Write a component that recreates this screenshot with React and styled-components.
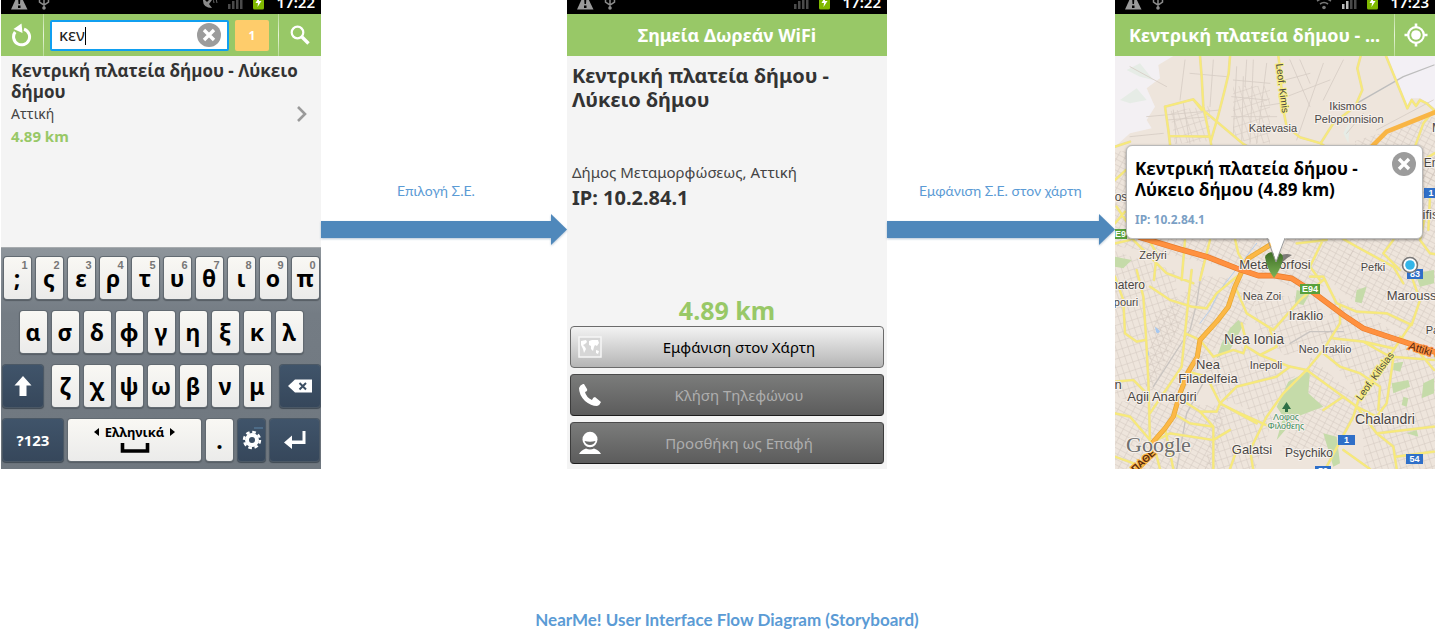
import React, { useState } from "react";
import styled, { createGlobalStyle, css } from "styled-components";

const GlobalStyle = createGlobalStyle`
    * { box-sizing: border-box; }
    body {
        margin: 0;
        background: white;
        font-family: "Noto Sans", "Open Sans", sans-serif;
    }
    h1, h2, h3, p { margin: 0; }
    button { font-family: inherit; padding: 0; border: 0; cursor: pointer; }
    svg { display: block; }
`;

const Page = styled.main`
    padding: 0 4px 0 1px;
`;

const Storyboard = styled.div`
    display: flex;
    align-items: stretch;
`;

const Phone = styled.section`
    flex: 0 0 320px;
    display: flex;
    flex-direction: column;
    background: #f4f4f4;
    overflow: hidden;
`;

const StatusBarWrapper = styled.div`
    display: flex;
    align-items: flex-end;
    height: 14px;
    padding: 0 6px 0 8px;
    gap: 9px;
    background: black;
    overflow: hidden;
`;

const Spacer = styled.span`
    flex: 1;
`;

const Clock = styled.span`
    color: white;
    font-size: 15px;
    font-weight: 600;
    line-height: 24px;
    padding-left: 3px;
`;

const TopBar = styled.header`
    display: flex;
    align-items: center;
    height: 42px;
    background: #98c867;
`;

const BarButton = styled.button`
    flex: 0 0 42px;
    height: 42px;
    display: grid;
    place-items: center;
    background: transparent;
    color: white;
`;

const Divider = styled.span`
    flex: 0 0 1px;
    align-self: stretch;
    background: linear-gradient(#b9dc97, #e6f3da 50%, #b9dc97);
`;

const BarTitle = styled.h2`
    flex: 1;
    padding: 0 14px;
    color: white;
    font-size: 18px;
    line-height: 24px;
    font-weight: 700;
    text-align: ${(props) => props.$align || "center"};
    white-space: nowrap;
`;

const SearchBox = styled.div`
    position: relative;
    display: flex;
    align-items: center;
    flex: 1;
    min-width: 0;
    height: 31px;
    margin: 0 6px;
    padding-right: 6px;
    border: 2px solid #109ff0;
    border-radius: 2px;
    background: white;
`;

const SearchInput = styled.input`
    flex: 1;
    min-width: 0;
    height: 27px;
    padding: 0 0 2px 7px;
    border: 0;
    outline: 0;
    background: transparent;
    color: #222;
    font-family: inherit;
    font-size: 17px;
`;

const Caret = styled.span`
    position: absolute;
    left: 33px;
    top: 5px;
    width: 1px;
    height: 18px;
    background: black;
`;

const CloseButton = styled.button`
    flex: 0 0 24px;
    width: 24px;
    height: 24px;
    border-radius: 50%;
    background: #9c9c9c;
    display: grid;
    place-items: center;
`;

const Count = styled.span`
    flex: 0 0 34px;
    height: 31px;
    margin-right: 9px;
    border-radius: 2px;
    background: #fecc6b;
    color: white;
    font-size: 12px;
    font-weight: 700;
    line-height: 31px;
    text-align: center;
`;

const ResultList = styled.ul`
    flex: 1;
    min-height: 191px;
    margin: 0;
    padding: 4px 10px;
    list-style: none;
`;

const Result = styled.li`
    display: flex;
    align-items: center;
`;

const ResultText = styled.div`
    flex: 1;
`;

const ResultTitle = styled.h3`
    color: #333;
    font-family: "Open Sans", "Noto Sans", sans-serif;
    font-size: 17px;
    line-height: 21px;
    white-space: nowrap;
`;

const ResultRow = styled.div`
    display: flex;
    justify-content: space-between;
    align-items: center;
    height: 24px;
    padding-right: 3px;
`;

const Region = styled.p`
    color: #444;
    font-size: 14px;
    line-height: 24px;
`;

const Distance = styled.p`
    color: #98c867;
    font-weight: 700;
    font-size: ${(props) => (props.$big ? "25px" : "15px")};
    line-height: ${(props) => (props.$big ? "32px" : "21px")};
    text-align: ${(props) => (props.$big ? "center" : "left")};
    margin-top: ${(props) => (props.$big ? "auto" : "0")};
`;

const Keyboard = styled.div`
    display: flex;
    flex-direction: column;
    gap: 12px;
    padding: 9px 1px 8px;
    background: linear-gradient(#8e959b, #747c84 30%, #6f777f);
    border-top: 1px solid #a7abae;
`;

const KeyRow = styled.div`
    display: flex;
    justify-content: center;
    gap: 5px;
`;

const LetterGroup = styled.div`
    display: flex;
    gap: 5px;
    margin: 0 4px;
`;

const Key = styled.button`
    position: relative;
    flex: 0 0 ${(props) => props.$width || 27}px;
    height: 42px;
    display: flex;
    flex-direction: column;
    align-items: center;
    justify-content: center;
    border-radius: 3px;
    color: black;
    font-size: 23px;
    line-height: 30px;
    font-weight: 700;
    background: linear-gradient(#f9f8f4, #ebebea);
    box-shadow: 0 0 0 1px #626a71, 0 1px 1px 1px #565d64;
    ${(props) =>
        props.$dark &&
        css`
            color: white;
            font-size: 15px;
            background: linear-gradient(#40546a, #36475b);
            box-shadow: 0 0 0 1px #4b5865, 0 1px 1px 1px #3f4953;
        `}
`;

const Hint = styled.span`
    position: absolute;
    right: 3px;
    top: 1px;
    color: #777;
    font-family: "Liberation Sans", Arial, sans-serif;
    font-size: 11px;
    font-weight: 700;
    line-height: 14px;
`;

const Language = styled.span`
    display: flex;
    align-items: center;
    gap: 6px;
    font-size: 13px;
    line-height: 16px;
`;

const FlowArrow = styled.div`
    flex: ${(props) => props.$grow} 1 0;
    min-width: 0;
    padding-top: 180px;
`;

const FlowLabel = styled.p`
    padding-left: ${(props) => props.$start}px;
    margin-bottom: 12px;
    color: #5b9bd5;
    font-family: Lato, "Noto Sans", sans-serif;
    font-size: 14px;
    line-height: 22px;
    white-space: nowrap;
`;

const ArrowLine = styled.div`
    display: flex;
    align-items: center;
    filter: drop-shadow(0 1px 1px rgba(70, 110, 150, 0.4));
`;

const ArrowBody = styled.div`
    flex: 1;
    height: 17px;
    background: #4f88bb;
`;

const Detail = styled.div`
    flex: 1;
    display: flex;
    flex-direction: column;
    padding: 8px 3px 5px;
`;

const DetailTitle = styled.h3`
    padding: 0 2px;
    color: #333;
    font-size: 20px;
    line-height: 24px;
`;

const Address = styled.p`
    margin-top: 48px;
    padding: 0 2px;
    color: #444;
    font-size: 15px;
    line-height: 24px;
`;

const IpLine = styled.p`
    padding: 0 2px;
    color: #333;
    font-size: 20px;
    font-weight: 700;
    line-height: 28px;
`;

const Actions = styled.div`
    display: flex;
    flex-direction: column;
    gap: 6px;
`;

const ActionButton = styled.button`
    display: flex;
    align-items: center;
    height: 42px;
    padding: 0 7px;
    border: 1px solid #6b6b6b;
    border-radius: 4px;
    background: linear-gradient(#f3f3f3, #b5b5b5);
    color: black;
    font-size: 15px;
    &:disabled {
        border-color: #4a4a4a #3c3c3c #1c1c1c;
        background: linear-gradient(#7b7c7b, #5c5c5c);
        color: #aeaeae;
    }
`;

const ActionText = styled.span`
    flex: 1;
    text-align: center;
`;

const MapArea = styled.div`
    position: relative;
    flex: 1;
    overflow: hidden;
    background: #eee6dc;
`;

const Balloon = styled.div`
    position: absolute;
    left: 11px;
    right: 12px;
    top: 89px;
    height: 94px;
    display: flex;
    align-items: flex-start;
    padding: 12px 6px 0 7px;
    border: 1px solid #b9b9b9;
    border-radius: 6px;
    background: white;
    box-shadow: 0 1px 3px rgba(0, 0, 0, 0.4);
`;

const BalloonText = styled.div`
    flex: 1;
    padding-left: 1px;
`;

const BalloonTitle = styled.h3`
    color: black;
    font-family: "Open Sans", "Noto Sans", sans-serif;
    font-size: 17px;
    line-height: 21px;
    white-space: nowrap;
`;

const BalloonIp = styled.p`
    margin-top: 10px;
    color: #7b9fc5;
    font-size: 12px;
    font-weight: 700;
    line-height: 20px;
`;

const CloseSlot = styled.div`
    margin-top: -6px;
`;

const Tail = styled.svg`
    position: absolute;
    left: 138px;
    top: 91px;
`;

const Caption = styled.h1`
    padding: 138px 0 8px 18px;
    color: #5b9bd5;
    font-family: Lato, "Noto Sans", sans-serif;
    font-size: 17px;
    line-height: 26px;
    text-align: center;
`;

function CrossIcon() {
    return (
        <svg width="14" height="14" viewBox="0 0 14 14">
            <path d="M2 2 L12 12 M12 2 L2 12" stroke="white" strokeWidth="3.4" />
        </svg>
    );
}

function StatusBar({ time, net }) {
    return (
        <StatusBarWrapper>
            <svg width="20" height="14" viewBox="0 0 20 14">
                <path d="M10 -8 L18.500 9.500 H2 Z" fill="#9a9a9a" />
                <path d="M9 -4 H11.500 L11 4 H9.500 Z M9 5.500 H11.500 V8 H9 Z" fill="black" />
            </svg>
            <svg width="12" height="14" viewBox="0 0 12 14" fill="none" stroke="#8b8b8b" strokeWidth="1.500">
                <path d="M6 -6 V7 M1.500 -1 V2 L6 5 L10.500 2 V-1" />
                <circle cx="6" cy="8" r="1.800" fill="#8b8b8b" stroke="none" />
            </svg>
            <Spacer />
            {net === "gps" && (
                <svg width="16" height="14" viewBox="0 0 16 14">
                    <path d="M1 -2 Q0 8 10 8 L7 4 L10 0 L8 -1 L5 2 Z" fill="#8b8b8b" />
                    <path d="M10 -1 Q12 0 12 3 M12 -3 Q15 -1 15 3" fill="none" stroke="#666" />
                </svg>
            )}
            {net === "wifi" && (
                <svg width="16" height="14" viewBox="0 0 16 14" fill="none" stroke="#777" strokeWidth="1.600">
                    <path d="M1 1 Q8 -4 15 1 M4 4 Q8 1 12 4" />
                    <circle cx="8" cy="7.500" r="1.800" fill="#777" stroke="none" />
                </svg>
            )}
            <svg width="16" height="14" viewBox="0 0 16 14" fill="#4a4a4a">
                <path d="M1 4 h2.500 v5 h-2.500 z M5 1 h2.500 v8 h-2.500 z" fill={net === "wifi" ? "#bbb" : "#4a4a4a"} />
                <path d="M9 -2 h2.500 v11 h-2.500 z M13 -5 h2.500 v14 h-2.500 z" />
            </svg>
            <svg width="13" height="14" viewBox="0 0 13 14">
                <rect x="1" y="-7" width="11" height="16.500" rx="1.500" fill="#7fb800" />
                <path d="M7 -3 L3.500 3 H6 L5.500 7 L9.500 1 H7 Z" fill="white" />
            </svg>
            <Clock>{time}</Clock>
        </StatusBarWrapper>
    );
}

function WorldIcon() {
    return (
        <svg width="24" height="22" viewBox="0 0 24 22">
            <rect x="1" y="1" width="22" height="20" fill="#d6d6d6" stroke="#f6f6f6" strokeWidth="1.500" />
            <path d="M3 5 L8 4 L9 6 L7 8 L5 9 L7 11 L8 13 L6 17 L5 13 L3 9 Z M11 5 L14 4 L20 4 L21 7 L19 10 L17 9 L16 11 L15 15 L13 13 L13 10 L11 9 Z M18 14 L21 15 L20 18 L18 17 Z" fill="white" />
        </svg>
    );
}

function PhoneIcon() {
    return (
        <svg width="24" height="24" viewBox="0 0 24 24">
            <path d="M5 1 Q2 2 1 5 Q1 12 7 18 Q13 23 19 23 Q22 22 23 19 L17 14 Q15 14 14 17 Q8 14 7 9 Q10 8 9 6 L6 1 Z" fill="white" />
        </svg>
    );
}

function PersonIcon() {
    return (
        <svg width="24" height="24" viewBox="0 0 24 24">
            <ellipse cx="12" cy="8.500" rx="7.500" ry="7.800" fill="white" />
            <path d="M6.500 10 Q12 11.500 17.500 10 Q16 14 12 14 Q8 14 6.500 10 Z" fill="#6a6b6a" />
            <path d="M1 23 Q3 19 8 17.500 Q12 19.500 16 17.500 Q21 19 23 23 Z" fill="white" />
        </svg>
    );
}

const firstRow = [";", "ς", "ε", "ρ", "τ", "υ", "θ", "ι", "ο", "π"];
const secondRow = ["α", "σ", "δ", "φ", "γ", "η", "ξ", "κ", "λ"];
const thirdRow = ["ζ", "χ", "ψ", "ω", "β", "ν", "μ"];

function SearchScreen() {
    const [query, setQuery] = useState("κεν");
    const type = (letter) => setQuery(query + letter);

    return (
        <Phone>
            <StatusBar time="17:22" net="gps" />
            <TopBar>
                <BarButton aria-label="Ανανέωση">
                    <svg width="22" height="24" viewBox="0 0 22 24">
                        <path d="M4.200 9 A8 8 0 1 0 13 6.200" fill="none" stroke="white" strokeWidth="3" />
                        <path d="M2.500 6 L10.500 0.500 L11.500 10 Z" fill="white" />
                    </svg>
                </BarButton>
                <Divider />
                <SearchBox>
                    <SearchInput aria-label="Αναζήτηση" value={query} onChange={(e) => setQuery(e.target.value)} />
                    {query === "κεν" && <Caret />}
                    <CloseButton aria-label="Καθαρισμός" onClick={() => setQuery("")}>
                        <CrossIcon />
                    </CloseButton>
                </SearchBox>
                <Count>1</Count>
                <Divider />
                <BarButton aria-label="Εύρεση">
                    <svg width="20" height="20" viewBox="0 0 20 20" fill="none" stroke="white">
                        <circle cx="7.500" cy="7.500" r="5.800" strokeWidth="2.200" />
                        <path d="M12 12 L18.500 18.500" strokeWidth="3.400" />
                    </svg>
                </BarButton>
            </TopBar>
            <ResultList>
                <Result>
                    <ResultText>
                        <ResultTitle>
                            Κεντρική πλατεία δήμου - Λύκειο
                            <br />
                            δήμου
                        </ResultTitle>
                        <ResultRow>
                            <Region>Αττική</Region>
                            <svg width="11" height="18" viewBox="0 0 11 18">
                                <path d="M1 2 L8 9 L1 16" fill="none" stroke="#9a9a9a" strokeWidth="2.600" />
                            </svg>
                        </ResultRow>
                        <Distance>4.89 km</Distance>
                    </ResultText>
                </Result>
            </ResultList>
            <Keyboard>
                <KeyRow>
                    {firstRow.map((letter, i) => (
                        <Key key={letter} onClick={() => type(letter)}>
                            <Hint>{(i + 1) % 10}</Hint>
                            {letter}
                        </Key>
                    ))}
                </KeyRow>
                <KeyRow>
                    {secondRow.map((letter) => (
                        <Key key={letter} onClick={() => type(letter)}>{letter}</Key>
                    ))}
                </KeyRow>
                <KeyRow>
                    <Key $dark $width={40} aria-label="Shift">
                        <svg width="18" height="20" viewBox="0 0 18 20">
                            <path d="M9 0 L17.500 9.500 H12.500 V20 H5.500 V9.500 H0.500 Z" fill="white" />
                        </svg>
                    </Key>
                    <LetterGroup>
                        {thirdRow.map((letter) => (
                            <Key key={letter} onClick={() => type(letter)}>{letter}</Key>
                        ))}
                    </LetterGroup>
                    <Key $dark $width={40} aria-label="Backspace" onClick={() => setQuery(query.slice(0, -1))}>
                        <svg width="24" height="14" viewBox="0 0 24 14">
                            <path d="M0 7 L7 0.500 H24 V13.500 H7 Z" fill="white" />
                            <path d="M11.500 4 L18 10.500 M18 4 L11.500 10.500" stroke="#3b4e63" strokeWidth="2" />
                        </svg>
                    </Key>
                </KeyRow>
                <KeyRow>
                    <Key $dark $width={60}>?123</Key>
                    <Key $width={133} onClick={() => type(" ")}>
                        <Language>
                            <svg width="6" height="8" viewBox="0 0 6 8"><path d="M6 0 V8 L1 4 Z" /></svg>
                            Ελληνικά
                            <svg width="6" height="8" viewBox="0 0 6 8"><path d="M0 0 V8 L5 4 Z" /></svg>
                        </Language>
                        <svg width="30" height="16" viewBox="0 0 30 16">
                            <path d="M2.500 3 V11 H27.500 V3" fill="none" stroke="black" strokeWidth="3.600" />
                        </svg>
                    </Key>
                    <Key onClick={() => type(".")}>.</Key>
                    <Key $dark aria-label="Ρυθμίσεις">
                        <svg width="24" height="36" viewBox="-12 -18 24 36">
                            <path d="M2 -12 H11" stroke="#5d86a8" strokeWidth="1" />
                            <circle r="5" fill="none" stroke="white" strokeWidth="4" />
                            <circle r="8" fill="none" stroke="white" strokeWidth="2.400" strokeDasharray="3.640 2.640" />
                        </svg>
                    </Key>
                    <Key $dark $width={49} aria-label="Enter">
                        <svg width="22" height="18" viewBox="0 0 22 18">
                            <path d="M0 11.500 L8 4.500 V9.500 H18.500 V0 H21.500 V13 H8 V18 Z" fill="white" />
                        </svg>
                    </Key>
                </KeyRow>
            </Keyboard>
        </Phone>
    );
}

function DetailScreen() {
    return (
        <Phone>
            <StatusBar time="17:22" />
            <TopBar>
                <BarTitle>Σημεία Δωρεάν WiFi</BarTitle>
            </TopBar>
            <Detail>
                <DetailTitle>
                    Κεντρική πλατεία δήμου -
                    <br />
                    Λύκειο δήμου
                </DetailTitle>
                <Address>Δήμος Μεταμορφώσεως, Αττική</Address>
                <IpLine>IP: 10.2.84.1</IpLine>
                <Distance $big>4.89 km</Distance>
                <Actions>
                    <ActionButton>
                        <WorldIcon />
                        <ActionText>Εμφάνιση στον Χάρτη</ActionText>
                    </ActionButton>
                    <ActionButton disabled>
                        <PhoneIcon />
                        <ActionText>Κλήση Τηλεφώνου</ActionText>
                    </ActionButton>
                    <ActionButton disabled>
                        <PersonIcon />
                        <ActionText>Προσθήκη ως Επαφή</ActionText>
                    </ActionButton>
                </Actions>
            </Detail>
        </Phone>
    );
}

const MapSvg = styled.svg`
    width: 100%;
    height: 413px;
    text {
        font-family: "Liberation Sans", Arial, sans-serif;
        fill: #4a4644;
        stroke: #f6f1ec;
        stroke-width: 2px;
        paint-order: stroke;
    }
`;

const places = [
    { name: "Ikismos", x: 233, y: 54, size: 11 },
    { name: "Peloponnision", x: 234, y: 67, size: 11 },
    { name: "Katevasia", x: 158, y: 76, size: 11 },
    { name: "M", x: 322, y: 76, size: 12 },
    { name: "En", x: 316, y: 111, size: 12 },
    { name: "os", x: 6, y: 145, size: 12 },
    { name: "ifisi", x: 317, y: 163, size: 13 },
    { name: "Zefyri", x: 38, y: 203, size: 11 },
    { name: "Metamorfosi", x: 160, y: 213, size: 13 },
    { name: "Pefki", x: 258, y: 215, size: 11 },
    { name: "natero", x: 13, y: 233, size: 12 },
    { name: "pouri", x: 11, y: 250, size: 11 },
    { name: "Nea Zoi", x: 147, y: 244, size: 11 },
    { name: "Iraklio", x: 191, y: 264, size: 13 },
    { name: "Maroussi", x: 298, y: 244, size: 13 },
    { name: "Pat", x: 319, y: 278, size: 11 },
    { name: "Nea Ionia", x: 139, y: 288, size: 14 },
    { name: "Neo Iraklio", x: 210, y: 297, size: 11 },
    { name: "Inepoli", x: 151, y: 313, size: 11 },
    { name: "Nea", x: 93, y: 313, size: 13 },
    { name: "Filadelfeia", x: 93, y: 327, size: 13 },
    { name: "n", x: 3, y: 333, size: 13 },
    { name: "Agii Anargiri", x: 47, y: 345, size: 13 },
    { name: "Chalandri", x: 270, y: 368, size: 14 },
    { name: "Galatsi", x: 137, y: 398, size: 13 },
    { name: "Psychiko", x: 194, y: 401, size: 12 },
];

const shields = [
    { name: "E94", x: 185, y: 228, w: 20, color: "#58a13c" },
    { name: "E9", x: -1, y: 173, w: 13, color: "#58a13c" },
    { name: "1", x: 309, y: 132, w: 14, color: "#2f6fc8" },
    { name: "83", x: 292, y: 213, w: 16, color: "#2f6fc8" },
    { name: "1", x: 223, y: 379, w: 17, color: "#2f6fc8" },
    { name: "54", x: 291, y: 398, w: 17, color: "#2f6fc8" },
    { name: "59", x: 200, y: 410, w: 16, color: "#2f6fc8" },
];

// roads of the strip above the balloon
const northRoads = [
    "M270 168 L275 230 L280 320 L302 425 L310 470",
    "M360 168 L356 220 L343 275 L325 345 L302 425",
    "M165 320 L250 298 L285 335 L400 432 L430 450",
    "M165 320 L175 390 L182 450",
    "M250 298 L275 330 M180 408 L300 410",
    "M505 168 L508 190 L520 330 L530 380 L570 412 L632 430 L660 450",
    "M752 168 L742 205 L757 270 L735 320 L670 370 L632 430",
    "M828 168 L892 325 L905 300 L918 318 L930 300 L950 310 L972 330 L940 370 L915 440",
    "M15 440 L60 425",
];

const middleRoads = [
    "M15 250 L45 215 M15 120 L48 90 M20 200 L60 260",
    "M940 60 L990 30 M945 230 L930 300 L960 340 L990 345 M960 170 L955 270",
    "M115 297 L140 340 L132 420 M60 290 L170 400 L250 430 M225 300 L215 420 M15 310 L60 300",
    "M375 297 L385 340 L420 400 M300 300 L270 420 M640 297 L600 380 L630 420 M560 310 L650 300",
    "M700 297 L740 320 L850 380 L880 430 M850 300 L820 340 L870 390",
];

const southRoads = [
    "M15 20 L40 90 L45 190 L80 215 L105 210 M80 0 L100 80 L108 200 L115 330 L120 520",
    "M245 0 L235 90 L225 190 L215 290 L120 430 M120 50 L180 90 L245 110 L290 115",
    "M290 115 L320 70 L380 20 M380 60 L410 130 L490 180 L570 90 L640 30",
    "M225 190 L270 210 L310 260 L370 240 L400 250 L410 220 L395 160",
    "M410 230 L450 255 L500 230 L480 180 M450 255 L540 290 L590 300 L740 410 L800 490 L972 470",
    "M590 300 L520 370 L470 440 L440 500 L420 540 L430 600",
    "M590 300 L640 240 L690 160 L690 110 M600 20 L640 20 L680 100 L740 125 L830 130 L905 165",
    "M670 205 L760 215 L850 235 M760 215 L840 260 L972 270",
    "M905 165 L930 90 L905 20 M905 160 L830 270 L745 390 L730 440 L650 590",
    "M870 200 L930 250 L972 300 M850 265 L830 400 L800 440 L740 410",
    "M640 250 L690 290 L750 310 L810 350 L805 420",
    "M15 335 L70 330 L110 370 M15 430 L60 440 L120 510 M120 520 L180 490 L310 510 L360 480",
    "M200 380 L270 425 L310 470 L310 597 M270 425 L320 425 L330 400 L440 460",
    "M235 305 L290 320 L330 400 L380 350 L500 320 L540 290",
    "M190 430 L240 460 L310 470 M15 560 L70 580 M130 520 L150 597 M165 475 L190 597",
    "M360 597 L380 540 L420 540 M700 540 L780 597 M800 490 L850 530 L860 597 M860 560 L972 545",
    "M330 400 L390 430 L480 470 M740 410 L700 380 L640 420",
];

const streets = [
    "M380 200 L370 400 M400 230 L395 430 M430 180 L420 430 M470 190 L440 430 M370 240 L480 250 M365 290 L470 300 M365 350 L500 350",
    "M540 180 L600 320 M570 180 L600 250 M525 240 L600 220 M530 290 L660 240 M60 200 L170 260 M110 350 L330 330",
    "M190 330 L200 430 M220 310 L240 430 M170 360 L300 350 M640 190 L560 420 M700 180 L640 300 M710 400 L760 340 M800 390 L970 300",
    "M225 180 L210 300 M240 220 L350 230 M310 180 L300 320 M60 410 L160 400 M410 180 L405 260 M450 320 L510 310",
];

const nationalRoad = "M480 -75 L415 -35 L395 5 L375 50 L355 110 L320 155 L270 210 L262 260 L235 305 L210 370 L190 440 L165 475 L130 515 L120 560 L75 605";
const attikiRoad = "M90 -98 L210 -62 L290 -40 L380 -5 L445 17 L495 17 L545 25 L600 60 L640 90 L700 135 L760 175 L850 205 L985 249";

function CityMap() {
    return (
        <MapSvg viewBox="0 0 320 413" preserveAspectRatio="xMinYMin slice" role="img" aria-label="Χάρτης">
            <defs>
                <pattern id="blocksA" width="7" height="5" patternUnits="userSpaceOnUse" patternTransform="rotate(28)">
                    <path d="M0 0 H7 M0 0 V5" stroke="#c6bcb4" strokeWidth="1" opacity="0.7" />
                </pattern>
                <pattern id="blocksB" width="6" height="8" patternUnits="userSpaceOnUse" patternTransform="rotate(-18)">
                    <path d="M0 0 H6 M0 0 V8" stroke="#c6bcb4" strokeWidth="1" opacity="0.7" />
                </pattern>
                <linearGradient id="pin" x1="0" y1="0" x2="0" y2="1">
                    <stop offset="0" stopColor="#3d6d25" />
                    <stop offset="1" stopColor="#7cb356" />
                </linearGradient>
            </defs>
            <rect width="320" height="413" fill="#eee5dc" />
            <g fill="url(#blocksA)">
                <path d="M0 95 L320 100 V200 L240 195 L200 240 L150 220 L60 200 L0 190 Z" />
                <path d="M90 220 L150 225 L130 270 L90 300 L60 350 L30 330 L40 260 Z" />
                <path d="M195 300 L250 350 L220 390 L165 395 L190 340 Z M240 85 L320 60 V130 L240 110 Z" />
                <path d="M0 345 L110 350 L100 413 H0 Z M235 195 L320 200 V290 L250 255 L215 225 Z" />
            </g>
            <g fill="url(#blocksB)">
                <path d="M118 30 L155 30 V88 L118 84 Z M55 55 L95 50 L95 85 L60 88 Z" />
                <path d="M0 195 L60 215 L65 270 L30 350 L0 340 Z M140 240 L200 240 L220 280 L170 300 L140 270 Z" />
                <path d="M220 240 L320 300 V413 H250 L245 340 L205 290 Z M100 350 L160 360 L140 413 H90 Z" />
                <path d="M85 300 L130 290 L180 320 L150 360 L100 340 Z" />
            </g>
            <g transform="scale(0.33333)" strokeLinejoin="round" strokeLinecap="round">
                <g transform="translate(-15 -168)">
                    <path d="M15 168 H190 L145 195 L150 235 L110 265 L135 320 L110 360 L125 385 L60 400 L15 440 Z" fill="#f3f0f3" />
                    <path d="M828 168 H975 V325 L930 295 L905 295 L892 320 Z" fill="#f3f0f5" />
                    <path d="M50 210 L90 190 L130 240 L90 230 Z M30 300 L80 265 L110 300 L60 310 Z M700 400 L720 360 L715 430 Z" fill="#e6ece6" />
                    <path d={streets.join(" ")} fill="none" stroke="#d6ccc4" strokeWidth="2.500" />
                    <path d="M740 310 L880 230 L972 195" fill="none" stroke="#bdbdbd" strokeWidth="4" />
                    <path d={northRoads.join(" ")} fill="none" stroke="#e8dca0" strokeWidth="8" />
                    <path d={northRoads.join(" ")} fill="none" stroke="#f8ea78" strokeWidth="5" />
                    <path d="M785 440 L830 395 L985 333" fill="none" stroke="#f9b544" strokeWidth="14" />
                </g>
                <g transform="translate(-15 642)">
                    <g fill="#c5dba9">
                        <path d="M385 150 L400 165 L360 240 L320 265 L335 220 L360 175 Z" />
                        <path d="M535 335 L600 300 L595 370 L640 410 L560 440 L500 510 L520 440 L500 410 Z" />
                        <path d="M850 280 L880 275 L870 305 L850 300 Z M845 340 L895 330 L900 350 L850 370 Z M915 10 L972 0 V40 L930 50 Z" />
                        <path d="M940 340 L972 325 V370 L935 385 Z M890 490 L920 480 L925 500 Z M640 490 L680 500 L690 580 L670 590 Z M15 -40 L65 -30 L40 -5 L15 -10 Z" />
                        <path d="M560 60 L600 70 L580 105 L555 100 Z M740 60 L770 50 L755 100 L735 95 Z M880 380 L895 385 L890 410 L875 405 Z" />
                    </g>
                    <path d="M300 -90 L275 0 L260 100 L240 180 L130 350 M540 220 L600 185 L700 185 M290 320 L230 430 L200 597" fill="none" stroke="#c9c4c0" strokeWidth="4" />
                    <path d="M440 -80 L330 60 L300 120 L270 160" fill="none" stroke="#b5cdea" strokeWidth="3" />
                    <path d="M135 170 q12 8 15 14 q-6 10 -12 2 z M112 240 q8 10 4 18 q-8 -4 -4 -18 z" fill="#a6c8f0" />
                </g>
                <g transform="translate(-15 252)" fill="none">
                    <path d={middleRoads.join(" ")} stroke="#eadf9c" strokeWidth="8" />
                    <path d={middleRoads.join(" ")} stroke="#f8ea78" strokeWidth="5" />
                </g>
                <g transform="translate(-15 642)" fill="none">
                    <path d={southRoads.join(" ")} stroke="#eadf9c" strokeWidth="8" />
                    <path d={southRoads.join(" ")} stroke="#f8ea78" strokeWidth="5" />
                    <path d={nationalRoad} stroke="#e5a62f" strokeWidth="15" />
                    <path d={nationalRoad} stroke="#fcb846" strokeWidth="11" />
                    <path d={attikiRoad} stroke="#e87b2a" strokeWidth="17" />
                    <path d={attikiRoad} stroke="#ff9140" strokeWidth="13" />
                </g>
            </g>
            {places.map((place) => (
                <text key={place.name} x={place.x} y={place.y} fontSize={place.size} textAnchor="middle">{place.name}</text>
            ))}
            <g fontSize="10">
                <text transform="translate(161 8) rotate(83)" style={{ stroke: "#f8ee80" }}>Leof. Kimis</text>
                <text transform="translate(246 345) rotate(-54)" style={{ stroke: "#f8ee80" }}>Leof. Kifisias</text>
                <text transform="translate(293 293) rotate(17)" fontSize="11" style={{ stroke: "#ff9140", fill: "#5b2a10" }}>Attiki Odos</text>
                <text transform="translate(20 417) rotate(-42)" fontWeight="700" style={{ stroke: "#fcb846", fill: "#5b2a10" }}>ΠΑΘΕ</text>
            </g>
            <g fontSize="9" textAnchor="middle">
                <text x="171" y="364" style={{ fill: "#3f8d5c" }}>Λοφος</text>
                <text x="171" y="373" style={{ fill: "#3f8d5c" }}>Φιλοθεης</text>
            </g>
            <path d="M171.500 346 L176 353 H173 V356 H170 V353 H167 Z" fill="#2e7047" />
            {shields.map((shield) => (
                <g key={shield.name + shield.x}>
                    <rect x={shield.x} y={shield.y} width={shield.w} height="10" fill={shield.color} />
                    <text
                        x={shield.x + shield.w / 2}
                        y={shield.y + 8}
                        fontSize="9"
                        fontWeight="700"
                        textAnchor="middle"
                        style={{ fill: "white", stroke: "none" }}
                    >
                        {shield.name}
                    </text>
                </g>
            ))}
            <text x="11" y="396" fontSize="22" style={{ fontFamily: "Liberation Serif, serif", fill: "#6f6f6f" }}>Google</text>
            <path d="M160 203 Q168 196 177 199 Q168 204 162 213 Z" fill="#444" opacity="0.65" />
            <path d="M150 201 Q152 196 159 196 Q168 196 168 202 Q167 211 159 222 Q152 213 150 201 Z" fill="url(#pin)" />
            <circle cx="295" cy="209" r="7.500" fill="white" stroke="#777" strokeWidth="1.600" />
            <circle cx="295" cy="209" r="4.800" fill="#33b5e8" />
        </MapSvg>
    );
}

function MapScreen() {
    const [open, setOpen] = useState(true);
    return (
        <Phone>
            <StatusBar time="17:23" net="wifi" />
            <TopBar>
                <BarTitle $align="left">Κεντρική πλατεία δήμου - ...</BarTitle>
                <Divider />
                <BarButton aria-label="Η θέση μου">
                    <svg width="24" height="24" viewBox="0 0 24 24" fill="none" stroke="white">
                        <circle cx="12" cy="12" r="7.800" strokeWidth="2.200" />
                        <circle cx="12" cy="12" r="4.800" fill="white" stroke="none" />
                        <path d="M12 0.500 V4 M12 20 V23.500 M0.500 12 H4 M20 12 H23.500" strokeWidth="2.600" />
                    </svg>
                </BarButton>
            </TopBar>
            <MapArea>
                <CityMap />
                {open && (
                    <Balloon>
                        <BalloonText>
                            <BalloonTitle>
                                Κεντρική πλατεία δήμου -
                                <br />
                                Λύκειο δήμου (4.89 km)
                            </BalloonTitle>
                            <BalloonIp>IP: 10.2.84.1</BalloonIp>
                        </BalloonText>
                        <CloseSlot>
                            <CloseButton aria-label="Κλείσιμο" onClick={() => setOpen(false)}>
                                <CrossIcon />
                            </CloseButton>
                        </CloseSlot>
                        <Tail width="24" height="26" viewBox="0 0 24 26">
                            <path d="M1 0 H22 L20 2 L11 25 L4 2 Z" fill="white" />
                            <path d="M2 1 L11 25 L20 1" fill="none" stroke="#999" strokeWidth="1" />
                        </Tail>
                    </Balloon>
                )}
            </MapArea>
        </Phone>
    );
}

function Flow({ label, grow, start }) {
    return (
        <FlowArrow $grow={grow}>
            <FlowLabel $start={start}>{label}</FlowLabel>
            <ArrowLine>
                <ArrowBody />
                <svg width="16" height="31" viewBox="0 0 16 31">
                    <path d="M0 0 L16 15.500 L0 31 Z" fill="#4f88bb" />
                </svg>
            </ArrowLine>
        </FlowArrow>
    );
}

function App() {
    return (
        <>
            <GlobalStyle />
            <Page>
                <Storyboard>
                    <SearchScreen />
                    <Flow label="Επιλογή Σ.Ε." grow={246} start={76} />
                    <DetailScreen />
                    <Flow label="Εμφάνιση Σ.Ε. στον χάρτη" grow={228} start={32} />
                    <MapScreen />
                </Storyboard>
                <Caption>NearMe! User Interface Flow Diagram (Storyboard)</Caption>
            </Page>
        </>
    );
}

export default App;
